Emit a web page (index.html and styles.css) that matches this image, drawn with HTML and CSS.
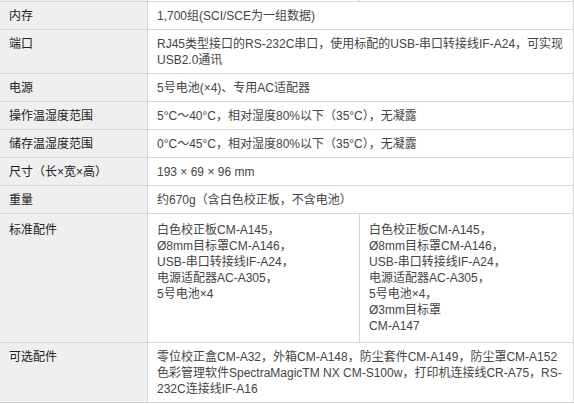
FILE: index.html
```html
<!DOCTYPE html>
<html lang="zh-CN">
<head>
<meta charset="utf-8">
<link rel="stylesheet" href="styles.css">
</head>
<body>
<div class="wrap">
<table class="spec">
  <colgroup><col class="c-label"><col class="c-v1"><col class="c-v2"></colgroup>
  <tr class="prev"><td class="label"></td><td></td><td></td></tr>
  <tr><td class="label">内存</td><td class="val" colspan="2">1,700组(SCI/SCE为一组数据)</td></tr>
  <tr><td class="label">端口</td><td class="val" colspan="2">RJ45类型接口的RS-232C串口，使用标配的USB-串口转接线IF-A24，可实现USB2.0通讯</td></tr>
  <tr><td class="label">电源</td><td class="val" colspan="2">5号电池(×4)、专用AC适配器</td></tr>
  <tr><td class="label">操作温湿度范围</td><td class="val" colspan="2">5°C～40°C，相对湿度80%以下（35°C），无凝露</td></tr>
  <tr><td class="label">储存温湿度范围</td><td class="val" colspan="2">0°C～45°C，相对湿度80%以下（35°C），无凝露</td></tr>
  <tr><td class="label">尺寸（长×宽×高）</td><td class="val" colspan="2">193 × 69 × 96 mm</td></tr>
  <tr><td class="label">重量</td><td class="val" colspan="2">约670g（含白色校正板，不含电池）</td></tr>
  <tr class="acc"><td class="label">标准配件</td><td class="val">白色校正板CM-A145，<br>Ø8mm目标罩CM-A146，<br>USB-串口转接线IF-A24，<br>电源适配器AC-A305，<br>5号电池×4</td><td class="val">白色校正板CM-A145，<br>Ø8mm目标罩CM-A146，<br>USB-串口转接线IF-A24，<br>电源适配器AC-A305，<br>5号电池×4，<br>Ø3mm目标罩<br>CM-A147</td></tr>
  <tr><td class="label">可选配件</td><td class="val" colspan="2">零位校正盒CM-A32，外箱CM-A148，防尘套件CM-A149，防尘罩CM-A152<br>色彩管理软件SpectraMagicTM NX CM-S100w，打印机连接线CR-A75，RS-232C连接线IF-A16</td></tr>
</table>
</div>
</body>
</html>
```
FILE: styles.css
```css
html, body {
  margin: 0;
  padding: 0;
  background: #fff;
}
.wrap {
  margin-top: -20px;
  margin-left: -1px;
  width: 574px;
}
.spec {
  border-collapse: collapse;
  table-layout: fixed;
  width: 574px;
  font-family: "Liberation Sans", Arial, "Noto Sans CJK SC", sans-serif;
  font-size: 12px;
  line-height: 16px;
}
.c-label { width: 148px; }
.c-v1 { width: 212px; }
.c-v2 { width: 214px; }
.spec td {
  border: 1px solid #d6d6d6;
  padding: 6px 8px 5px 9px;
  vertical-align: top;
  word-wrap: break-word;
}
.spec .label {
  background: #efefef;
  color: #222;
}
.spec .val {
  color: #444;
  background: #fff;
}
.spec .prev td {
  height: 20px;
  padding: 0;
}
.spec .acc td {
  padding-top: 8px;
  padding-bottom: 8px;
}
```
